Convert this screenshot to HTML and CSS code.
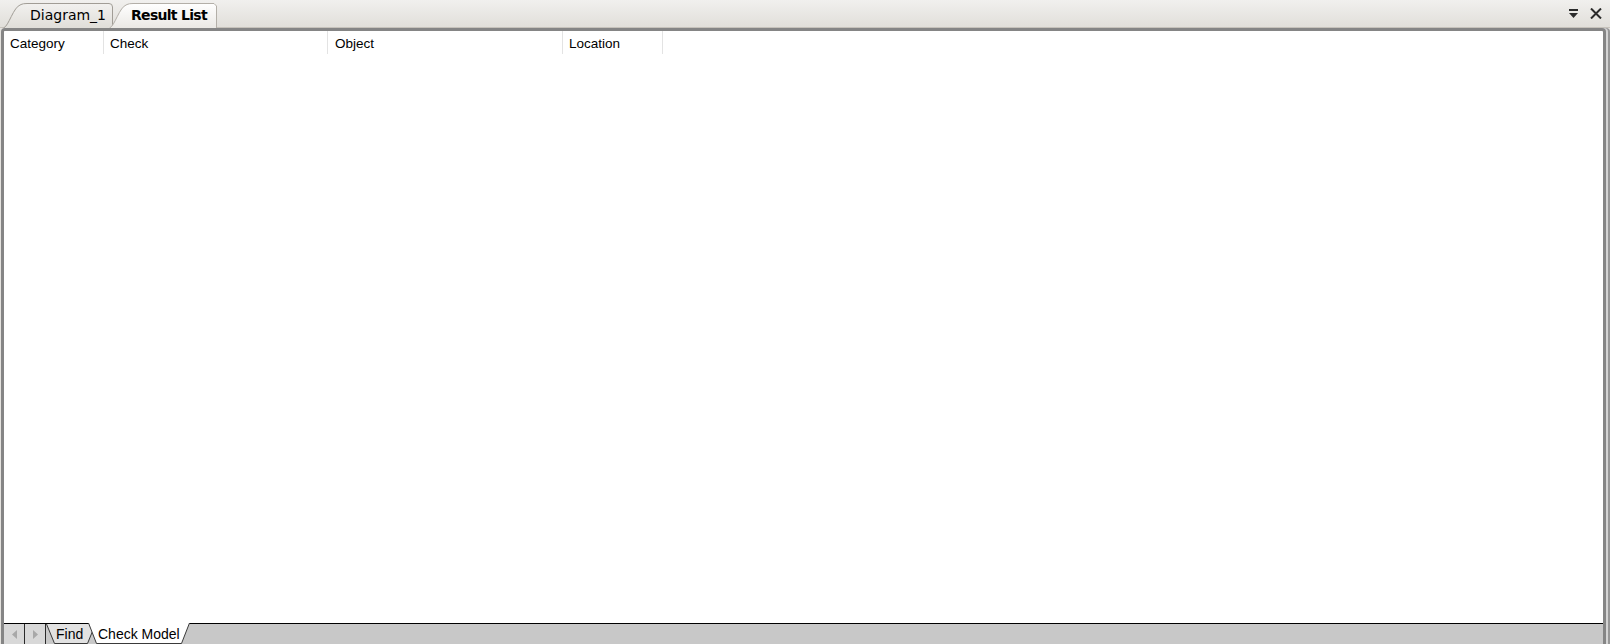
FILE: index.html
```html
<!DOCTYPE html>
<html lang="en">
<head>
    <meta charset="UTF-8">
    <meta name="viewport" content="width=device-width, initial-scale=1.0">
    <title>Result List</title>
    <link rel="stylesheet" href="styles.css">
</head>
<body>
    <div class="window">
        <div class="doc-tabs">
            <div class="doc-tab">
                <svg class="tab-shape" width="110" height="25" viewBox="0 0 110 25">
                    <defs>
                        <linearGradient id="tabIdle" x1="0" y1="0" x2="0" y2="1">
                            <stop offset="0" stop-color="#f2f1ef"/>
                            <stop offset="1" stop-color="#e0ded9"/>
                        </linearGradient>
                    </defs>
                    <path d="M0.5,25 C6,23 10,4 18,1.5 Q20,0.5 24,0.5 L106,0.5 Q109.5,0.5 109.5,4 L109.5,25" fill="url(#tabIdle)" stroke="#a19d96"/>
                </svg>
                <span class="tab-label">Diagram_1</span>
            </div>
            <div class="doc-tab active">
                <svg class="tab-shape" width="108" height="25" viewBox="0 0 108 25">
                    <defs>
                        <linearGradient id="tabActive" x1="0" y1="0" x2="0" y2="1">
                            <stop offset="0" stop-color="#ffffff"/>
                            <stop offset="1" stop-color="#ebe9e5"/>
                        </linearGradient>
                    </defs>
                    <path d="M0.5,25 C6,23 10,4 18,1.5 Q20,0.5 24,0.5 L105,0.5 L107.5,3 L107.5,25" fill="url(#tabActive)" stroke="#b3afa8"/>
                </svg>
                <span class="tab-label">Result List</span>
            </div>
            <div class="tab-tools">
                <svg class="tool pin" width="9" height="11" viewBox="0 0 9 11">
                    <rect x="0" y="1" width="9" height="2" fill="#2b2b2b"/>
                    <path d="M0,5 L9,5 L4.5,10 Z" fill="#2b2b2b"/>
                </svg>
                <svg class="tool close" width="12" height="11" viewBox="0 0 12 11">
                    <path d="M1,0.5 L11,10.5 M11,0.5 L1,10.5" stroke="#2b2b2b" stroke-width="2"/>
                </svg>
            </div>
        </div>

        <div class="panel">
            <div class="grid-head">
                <div class="col col-category">Category</div>
                <div class="col col-check">Check</div>
                <div class="col col-object">Object</div>
                <div class="col col-location">Location</div>
            </div>
            <div class="grid-body"></div>
            <div class="sheet-bar">
                <div class="nav-btn">
                    <svg width="5" height="9" viewBox="0 0 5 9"><path d="M5,0 L0,4.5 L5,9 Z" fill="#a8a8a8"/></svg>
                </div>
                <div class="nav-btn">
                    <svg width="5" height="9" viewBox="0 0 5 9"><path d="M0,0 L5,4.5 L0,9 Z" fill="#a8a8a8"/></svg>
                </div>
                <div class="sheet-tab find">
                    <svg class="sheet-shape" width="50" height="20" viewBox="0 0 50 20">
                        <path d="M0.5,0 L8.5,19.5 L41.5,19.5 L49.5,0" fill="#e2e2e2" stroke="#3a3a3a"/>
                    </svg>
                    <span class="sheet-label">Find</span>
                </div>
                <div class="sheet-tab active">
                    <svg class="sheet-shape" width="102" height="21" viewBox="0 0 102 21">
                        <path d="M0.5,0 L8.5,20.5 L93.5,20.5 L101.5,0 Z" fill="#ffffff"/>
                        <path d="M0.5,0 L8.5,20.5 L93.5,20.5 L101.5,0" fill="none" stroke="#3a3a3a"/>
                    </svg>
                    <span class="sheet-label">Check Model</span>
                </div>
            </div>
        </div>
    </div>
</body>
</html>
```

FILE: styles.css
```css
html, body {
    margin: 0;
    padding: 0;
    height: 100%;
    overflow: hidden;
}
body {
    background-color: #e4e2de;
    font-family: "Liberation Sans", Arial, sans-serif;
}
.window {
    display: flex;
    flex-direction: column;
    height: 100vh;
}

/* document tabs across the top */
.doc-tabs {
    display: flex;
    align-items: flex-end;
    height: 28px;
    padding-left: 3px;
    background: linear-gradient(#f1f0ee, #e1dfda);
    box-sizing: border-box;
    border-bottom: 1px solid #c6c2bb;
}
.doc-tab {
    position: relative;
    height: 25px;
    width: 110px;
    margin-bottom: -1px;
}
.doc-tab.active {
    width: 108px;
    margin-left: -4px;
}
.tab-shape {
    position: absolute;
    left: 0;
    top: 0;
}
.tab-label {
    position: relative;
    display: block;
    padding-left: 27px;
    line-height: 25px;
    font-family: "DejaVu Sans", Tahoma, sans-serif;
    font-size: 14px;
    color: #000;
}
.doc-tab.active .tab-label {
    padding-left: 22px;
    font-weight: bold;
    font-size: 14px;
    letter-spacing: -0.7px;
}
.tab-tools {
    margin-left: auto;
    align-self: flex-start;
    display: flex;
    align-items: flex-start;
    gap: 12px;
    padding: 8px 8px 0 0;
}
.tool {
    display: block;
}

/* the result list frame */
.panel {
    flex: 1;
    display: flex;
    flex-direction: column;
    margin: 0 4px 0 1px;
    border: 3px solid #858585;
    border-bottom: none;
    border-radius: 4px 4px 0 0;
    background: #fff;
    box-shadow: 2px 0 0 #d4d4d4, 4px 0 0 #979797;
}
.grid-head {
    display: flex;
    height: 23px;
    font-size: 13.5px;
    color: #000;
}
.col {
    box-sizing: border-box;
    padding: 1px 0 0 6px;
    line-height: 23px;
    border-right: 1px solid #e3e3e3;
    white-space: nowrap;
}
.col-category { width: 100px; }
.col-check { width: 224px; }
.col-object { width: 235px; padding-left: 7px; }
.col-location { width: 100px; }

.grid-body {
    flex: 1;
}

/* sheet tabs at the bottom */
.sheet-bar {
    display: flex;
    height: 20px;
    border-top: 1px solid #000;
    background: #c8c8c8;
}
.nav-btn {
    width: 20px;
    height: 20px;
    display: flex;
    align-items: center;
    justify-content: center;
    background: #d8d8d8;
    border-right: 1px solid #2a2a2a;
}
.sheet-tab {
    position: relative;
    width: 50px;
    height: 20px;
}
.sheet-tab.active {
    width: 102px;
    margin-left: -8px;
    margin-top: -1px;
    height: 21px;
}
.sheet-shape {
    position: absolute;
    left: 0;
    top: 0;
}
.sheet-label {
    position: relative;
    display: block;
    padding-left: 10px;
    font-size: 14px;
    line-height: 20px;
    color: #000;
}
.sheet-tab.active .sheet-label {
    line-height: 22px;
}
```
